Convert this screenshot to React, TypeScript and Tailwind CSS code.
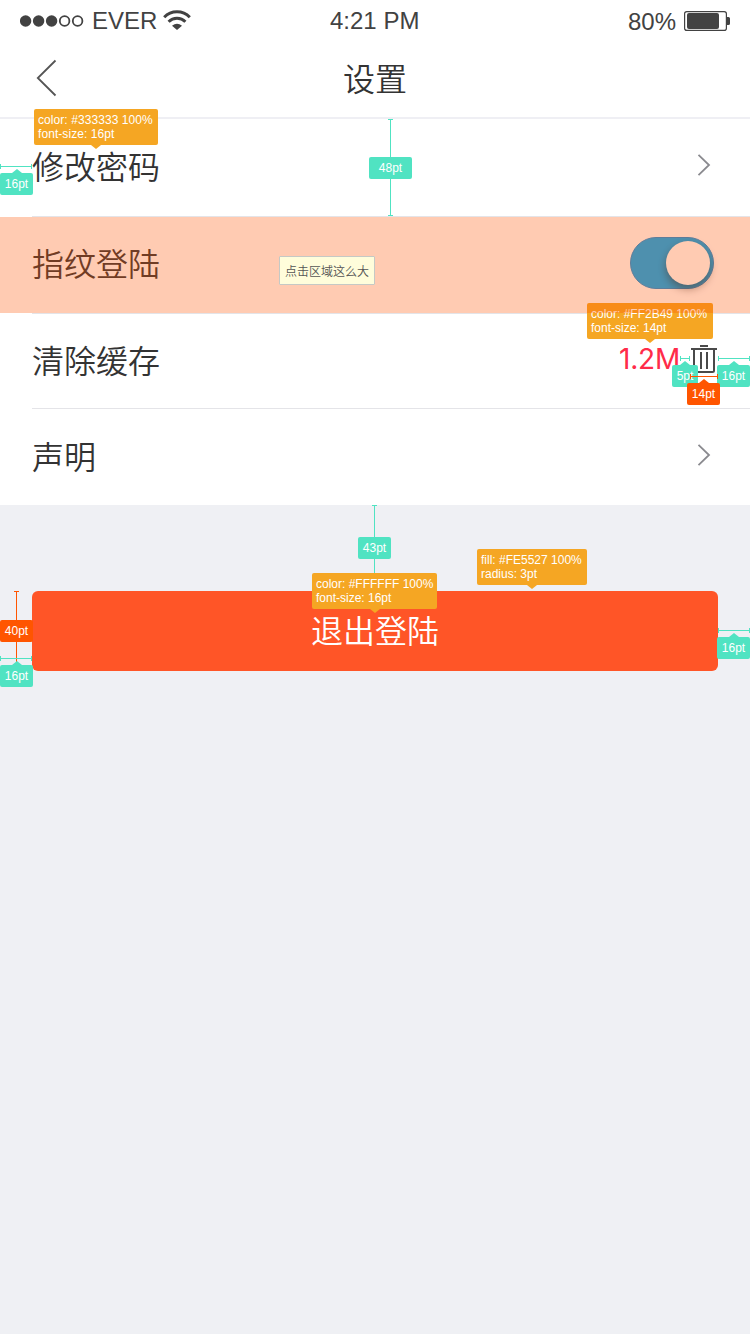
import type { ReactNode } from "react";

const cjk = "font-['Noto_Sans_CJK_SC',sans-serif] font-[350]";

function StatusBar() {
  return (
    <div className="flex h-10 shrink-0 items-center pt-0.5 text-2xl text-[#424242]">
      <div className="flex w-[330px] items-center pl-5">
        <svg width="64" height="12" viewBox="0 0 64 12" fill="#424242" className="shrink-0">
          <circle cx="5.6" cy="6" r="5.7" />
          <circle cx="18.6" cy="6" r="5.7" />
          <circle cx="31.6" cy="6" r="5.7" />
          <circle cx="44.6" cy="6" r="4.8" fill="none" stroke="#424242" strokeWidth="1.8" />
          <circle cx="57.6" cy="6" r="4.8" fill="none" stroke="#424242" strokeWidth="1.8" />
        </svg>
        <span className="ml-2 w-[65px] whitespace-nowrap">EVER</span>
        <svg width="28" height="20" viewBox="0 0 28 20" fill="none" stroke="#424242" strokeWidth="3" className="mb-0.5 ml-1.5 shrink-0">
          <path d="M1.2 7.2A18 18 0 0 1 26.8 7.2" />
          <path d="M5.6 11.7A12 12 0 0 1 22.4 11.7" />
          <path d="M14 20 9 15.7Q14 11.6 19 15.7Z" fill="#424242" stroke="none" />
        </svg>
      </div>
      <span className="w-[298px] whitespace-nowrap">4:21 PM</span>
      <span className="w-14 pt-0.5 whitespace-nowrap">80%</span>
      <svg width="46" height="20" viewBox="0 0 46 20" className="shrink-0">
        <rect x="0.6" y="0.6" width="41.8" height="18.8" rx="2.2" fill="none" stroke="#424242" strokeWidth="1.2" />
        <rect x="3" y="2" width="32" height="16" rx="2" fill="#424242" />
        <path d="M43 6h1.5a1.5 1.5 0 0 1 1.5 1.5v5a1.5 1.5 0 0 1-1.5 1.5H43z" fill="#424242" />
      </svg>
    </div>
  );
}

function ChevronRight() {
  return (
    <svg width="14" height="24" viewBox="0 0 14 24" fill="none" stroke="#8a8a8f" strokeWidth="1.8" className="mr-[39px]">
      <path d="M1.5 1.8 12 12 1.5 22.2" />
    </svg>
  );
}

function Row({ label, children, className }: { label: string; children?: ReactNode; className: string }) {
  return (
    <div className={`flex shrink-0 items-center justify-between border-[#e4e4e8] ${className}`}>
      <span className={`${cjk} text-[32px] leading-[48px] text-[#333]`}>{label}</span>
      {children}
    </div>
  );
}

function Spec({ a, b, className, arrow }: { a: string; b: string; className: string; arrow: string }) {
  return (
    <div className={`absolute flex flex-col rounded-xs bg-[#f5a623] text-xs leading-[14px] whitespace-nowrap text-white ${className}`}>
      <div className="h-9 shrink-0 px-1 pt-1">
        <div>{a}</div>
        <div>{b}</div>
      </div>
      <svg width="10" height="4" viewBox="0 0 10 4" fill="#f5a623" className={`-mb-1 shrink-0 ${arrow}`}>
        <path d="M0 0h10L5 4z" />
      </svg>
    </div>
  );
}

function Size({ text, className, tip }: { text: string; className: string; tip?: string }) {
  return (
    <div className={`absolute flex h-[22px] flex-col items-center rounded-xs text-xs leading-[22px] text-white ${className}`}>
      {tip && (
        <svg width="10" height="4" viewBox="0 0 10 4" className={`-mt-1 shrink-0 ${tip}`} fill="currentColor">
          <path d="M0 4h10L5 0z" />
        </svg>
      )}
      <span>{text}</span>
    </div>
  );
}

function HLine({ className }: { className: string }) {
  return (
    <div className={`absolute flex h-[5px] items-center border-x ${className}`}>
      <div className="w-full border-t border-inherit" />
    </div>
  );
}

function VLine({ className }: { className: string }) {
  return (
    <div className={`absolute flex w-[5px] justify-center border-y ${className}`}>
      <div className="h-full border-l border-inherit" />
    </div>
  );
}

export default function App() {
  return (
    <div className="relative flex h-[1334px] w-[750px] flex-col overflow-hidden bg-[#eff0f4] font-['Liberation_Sans',sans-serif]">
      <header className="flex h-[119px] shrink-0 flex-col border-b-2 border-[#efeff4] bg-white">
        <StatusBar />
        <div className="flex h-[77px] items-center pb-1">
          <svg width="22" height="38" viewBox="0 0 22 38" fill="none" stroke="#555" strokeWidth="1.8" className="mt-0.5 ml-9">
            <path d="M19.5 1.5 1.8 19 19.5 36.5" />
          </svg>
          <h1 className={`${cjk} ml-[285px] text-[32px] leading-[48px] text-[#333]`}>设置</h1>
        </div>
      </header>

      <main className="flex shrink-0 flex-col bg-white pl-8">
        <Row label="修改密码" className="h-[98px] border-b pb-[5px]">
          <ChevronRight />
        </Row>
        <Row label="指纹登陆" className="h-[97px] border-b pb-[7px]">
          <div className="mt-[3px] mr-9 flex h-[52px] w-[84px] items-center justify-end rounded-full border border-[#1a90dc] bg-[#02acf9] pr-[3px]">
            <div className="h-11 w-11 rounded-full bg-white shadow-[0_4px_8px_rgba(0,0,0,0.4)]" />
          </div>
        </Row>
        <Row label="清除缓存" className="h-[95px] border-b pb-1">
          <div className="mr-8 flex items-center">
            <span className="w-[71px] font-['Inter',sans-serif] text-[28px] font-normal tracking-[-0.2px] whitespace-nowrap text-[#ff2b49]">1.2M</span>
            <svg width="28" height="28" viewBox="0 0 28 28" fill="none" stroke="#4a4a4a" strokeWidth="2">
              <path d="M10 1h8M1 4h26M4 4v21.5q0 1.5 1.5 1.5h17q1.5 0 1.5-1.5V4M11 7v17M17 7v17" />
            </svg>
          </div>
        </Row>
        <Row label="声明" className="h-24 pb-1">
          <ChevronRight />
        </Row>
      </main>

      <button className={`${cjk} mx-8 mt-[86px] flex h-20 shrink-0 items-center justify-center rounded-md bg-[#ff5527] pb-1 text-[32px] text-white`}>
        退出登陆
      </button>

      <Spec a="color: #333333 100%" b="font-size: 16pt" className="top-[109px] left-[34px] w-[124px] tracking-[0.07px]" arrow="ml-[57px]" />
      <Spec a="color: #FF2B49 100%" b="font-size: 14pt" className="top-[303px] left-[587px] w-[126px]" arrow="ml-[58px]" />
      <VLine className="top-[505px] left-[372px] h-[80px] border-[#50e3c2]" />
      <Spec a="color: #FFFFFF 100%" b="font-size: 16pt" className="top-[573px] left-[312px] w-[125px]" arrow="ml-[58px]" />
      <Spec a="fill: #FE5527 100%" b="radius: 3pt" className="top-[549px] left-[477px] w-[110px]" arrow="ml-[50px]" />

      <div className="absolute top-[217px] left-0 h-24 w-full bg-[#ff5000]/30" />
      <div className="absolute top-64 left-[279px] flex h-[29px] w-24 items-center justify-center rounded-[1px] border border-[#c5c9c5] bg-[#fffddb] font-['Noto_Sans_CJK_SC',sans-serif] text-xs font-[350] whitespace-nowrap text-[#555]">
        点击区域这么大
      </div>

      <HLine className="top-[164px] left-0 w-8 border-[#50e3c2]" />
      <Size text="16pt" className="top-[173px] left-0 w-[33px] bg-[#50e3c2]" tip="text-[#50e3c2]" />
      <VLine className="top-[119px] left-[388px] h-[97px] border-[#50e3c2]" />
      <Size text="48pt" className="top-[157px] left-[369px] w-[43px] bg-[#50e3c2]" />

      <HLine className="top-[356px] left-[680px] w-2.5 border-[#50e3c2]" />
      <Size text="5pt" className="top-[365px] left-[672px] w-[26px] bg-[#50e3c2]" tip="text-[#50e3c2]" />
      <HLine className="top-[356px] left-[718px] w-8 border-[#50e3c2]" />
      <Size text="16pt" className="top-[365px] left-[717px] w-[33px] bg-[#50e3c2]" tip="text-[#50e3c2]" />
      <HLine className="top-[374px] left-[690px] w-7 border-[#ff5500]" />
      <Size text="14pt" className="top-[383px] left-[687px] w-[33px] bg-[#ff5500]" tip="text-[#ff5500]" />

      <Size text="43pt" className="top-[537px] left-[358px] w-[33px] bg-[#50e3c2]" />
      <VLine className="top-[591px] left-[14px] h-20 border-[#ff5500]" />
      <Size text="40pt" className="top-[620px] left-0 w-[33px] bg-[#ff5500]" />
      <HLine className="top-[656px] left-0 w-8 border-[#50e3c2]" />
      <Size text="16pt" className="top-[665px] left-0 w-[33px] bg-[#50e3c2]" tip="text-[#50e3c2]" />
      <HLine className="top-[628px] left-[718px] w-8 border-[#50e3c2]" />
      <Size text="16pt" className="top-[637px] left-[717px] w-[33px] bg-[#50e3c2]" tip="text-[#50e3c2]" />
    </div>
  );
}
